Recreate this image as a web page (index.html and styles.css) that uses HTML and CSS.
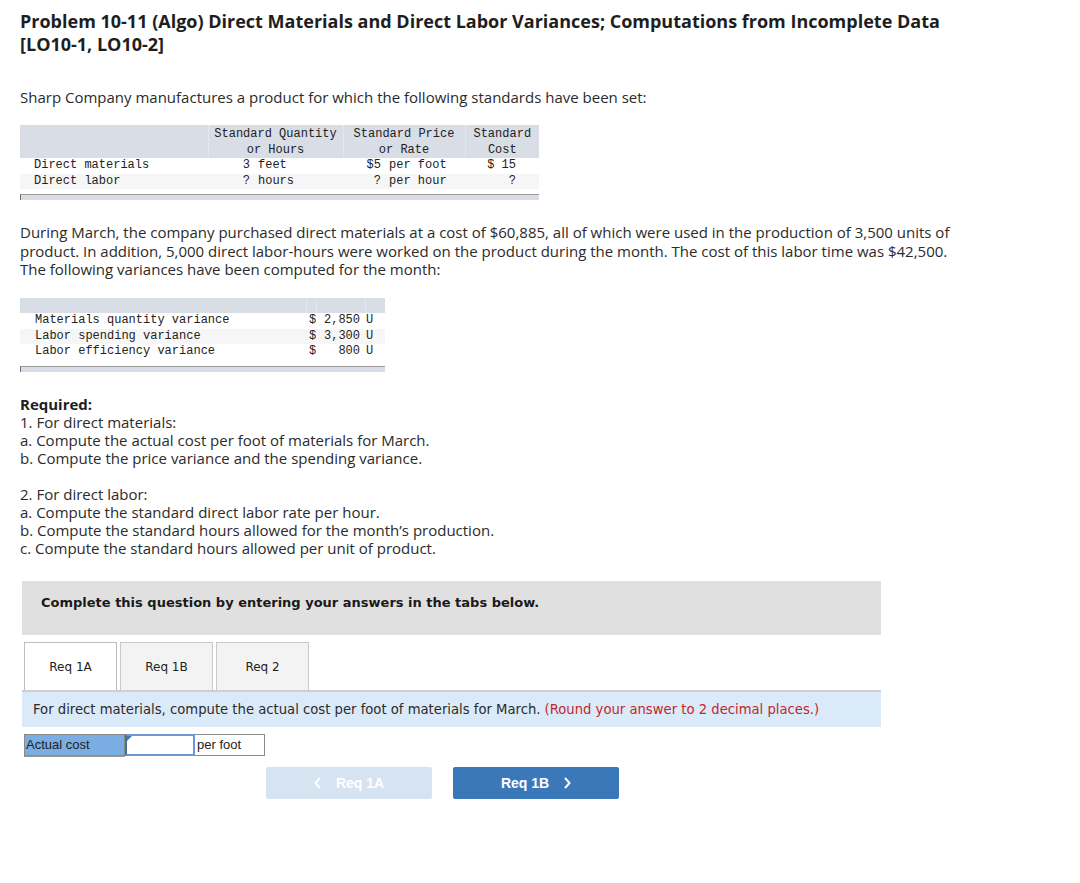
FILE: index.html
```html
<!DOCTYPE html>
<html>
<head>
<meta charset="utf-8">
<link rel="stylesheet" href="styles.css">
</head>
<body>
<div class="page">
  <h1 class="title">Problem 10-11 (Algo) Direct Materials and Direct Labor Variances; Computations from Incomplete Data<br>[LO10-1, LO10-2]</h1>
  <p class="intro">Sharp Company manufactures a product for which the following standards have been set:</p>

  <table class="std">
    <colgroup>
      <col class="k-label">
      <col class="k-qn">
      <col class="k-qu">
      <col class="k-pn">
      <col class="k-pu">
      <col class="k-cost">
    </colgroup>
    <thead>
      <tr>
        <th></th>
        <th colspan="2">Standard Quantity<br>or Hours</th>
        <th colspan="2">Standard Price<br>or Rate</th>
        <th>Standard<br>Cost</th>
      </tr>
    </thead>
    <tbody>
      <tr>
        <td class="lbl">Direct materials</td>
        <td class="num">3</td>
        <td class="unit">feet</td>
        <td class="num">$5</td>
        <td class="unit">per foot</td>
        <td class="cost">$ 15</td>
      </tr>
      <tr class="alt">
        <td class="lbl">Direct labor</td>
        <td class="num">?</td>
        <td class="unit">hours</td>
        <td class="num">?</td>
        <td class="unit">per hour</td>
        <td class="cost">?</td>
      </tr>
    </tbody>
  </table>
  <div class="tbl-foot w1"></div>

  <p class="para">During March, the company purchased direct materials at a cost of $60,885, all of which were used in the production of 3,500 units of<br>product. In addition, 5,000 direct labor-hours were worked on the product during the month. The cost of this labor time was $42,500.<br>The following variances have been computed for the month:</p>

  <table class="var">
    <colgroup>
      <col class="v-label">
      <col class="v-dol">
      <col class="v-amt">
      <col class="v-u">
    </colgroup>
    <thead>
      <tr>
        <th></th>
        <th></th>
        <th></th>
        <th></th>
      </tr>
    </thead>
    <tbody>
      <tr>
        <td class="lbl">Materials quantity variance</td>
        <td class="dol">$</td>
        <td class="amt">2,850</td>
        <td class="u">U</td>
      </tr>
      <tr class="alt">
        <td class="lbl">Labor spending variance</td>
        <td class="dol">$</td>
        <td class="amt">3,300</td>
        <td class="u">U</td>
      </tr>
      <tr>
        <td class="lbl">Labor efficiency variance</td>
        <td class="dol">$</td>
        <td class="amt">800</td>
        <td class="u">U</td>
      </tr>
    </tbody>
  </table>
  <div class="tbl-foot w2"></div>

  <div class="required">
    <p><strong>Required:</strong><br>1. For direct materials:<br>a. Compute the actual cost per foot of materials for March.<br>b. Compute the price variance and the spending variance.</p>
    <p>2. For direct labor:<br>a. Compute the standard direct labor rate per hour.<br>b. Compute the standard hours allowed for the month’s production.<br>c. Compute the standard hours allowed per unit of product.</p>
  </div>

  <div class="question-box">Complete this question by entering your answers in the tabs below.</div>

  <div class="tabs">
    <div class="tab active">Req 1A</div>
    <div class="tab">Req 1B</div>
    <div class="tab">Req 2</div>
  </div>
  <div class="instruction">For direct materials, compute the actual cost per foot of materials for March. <span class="hint">(Round your answer to 2 decimal places.)</span></div>

  <div class="answer-row">
    <div class="answer-label">Actual cost</div>
    <div class="answer-input"><span class="flag"></span></div>
    <div class="answer-unit">per foot</div>
  </div>

  <div class="nav">
    <div class="btn prev">
      <svg class="chev" width="8" height="12" viewBox="0 0 8 12"><path d="M6 1 L1.5 6 L6 11" fill="none" stroke="#ffffff" stroke-width="2"/></svg>
      <span>Req 1A</span>
    </div>
    <div class="btn next">
      <span>Req 1B</span>
      <svg class="chev" width="8" height="12" viewBox="0 0 8 12"><path d="M2 1 L6.5 6 L2 11" fill="none" stroke="#ffffff" stroke-width="2"/></svg>
    </div>
  </div>
</div>
</body>
</html>
```
FILE: styles.css
```css
html, body {
  margin: 0;
  padding: 0;
  background: #ffffff;
}

.page {
  padding: 10px 20px 0 20px;
  width: 1040px;
  font-family: "Open Sans", Lato, sans-serif;
  color: #2b2b2b;
}

.title {
  margin: 0;
  font-size: 18px;
  line-height: 23px;
  font-weight: 700;
  color: #1e1e1e;
}

.intro {
  margin: 32px 0 0 0;
  font-size: 15px;
  line-height: 18px;
}

/* standards table */
.std, .var {
  border-collapse: collapse;
  table-layout: fixed;
  font-family: "Liberation Mono", "DejaVu Sans Mono", monospace;
  font-size: 12px;
  color: #222;
}

.std {
  margin-top: 19px;
  width: 519px;
}

.k-label { width: 188px; }
.k-qn { width: 42px; }
.k-qu { width: 93px; }
.k-pn { width: 38px; }
.k-pu { width: 84px; }
.k-cost { width: 74px; }

.std th, .var th {
  background: #d9dde6;
  font-weight: 400;
  line-height: 16px;
  padding: 0;
  text-align: center;
  border-left: 1px solid #e4e7ee;
}

.std th {
  padding-top: 1px;
}

.std th:first-child, .var th:first-child {
  border-left: none;
}

.std td, .var td {
  padding: 0;
  line-height: 15.5px;
  white-space: pre;
  overflow: hidden;
}

.alt td {
  background: #f6f6f6;
}

.std td.lbl { padding-left: 14px; }
.std td.num { text-align: right; }
.std td.unit { padding-left: 8px; }
.std td.cost { text-align: right; padding-right: 23px; }

.tbl-foot {
  margin-top: 6px;
  height: 5px;
  background: #d9dde6;
  border-top: 1px solid #9a9a9a;
  border-left: 1px solid #6f6f6f;
}

.tbl-foot.w1 { width: 518px; margin-top: 5px; }
.tbl-foot.w2 { width: 364px; }

.para {
  margin: 23px 0 0 0;
  font-size: 15px;
  line-height: 18.5px;
}

/* variance table */
.var {
  margin-top: 19.5px;
  width: 365px;
}

.var th { height: 15px; line-height: 15px; }
.v-label { width: 286px; }
.v-dol { width: 10px; }
.v-amt { width: 49px; }
.v-u { width: 20px; }

.var td.lbl { padding-left: 15px; }
.var td.dol { text-align: left; padding-left: 3px; }
.var td.amt { text-align: right; padding-right: 5px; }
.var td.u { padding-left: 1px; }

/* required */
.required {
  margin-top: 23px;
  font-size: 15px;
  line-height: 18px;
}

.required p {
  margin: 0 0 18px 0;
}

.required p:last-child {
  margin-bottom: 0;
}

.required strong {
  font-weight: 700;
  color: #1e1e1e;
}

/* question area */
.question-box {
  margin: 24.5px 0 0 2px;
  width: 840px;
  height: 40px;
  padding: 14px 0 0 19px;
  background: #e0e0e0;
  font-family: "DejaVu Sans", Verdana, sans-serif;
  font-size: 13px;
  line-height: 16px;
  font-weight: 700;
  color: #1a1a1a;
}

.tabs {
  display: flex;
  gap: 3px;
  margin: 7px 0 0 4px;
  height: 48px;
}

.tab {
  width: 91px;
  height: 47px;
  border: 1px solid #c9c9c9;
  border-bottom: none;
  background: #f3f3f3;
  display: flex;
  align-items: center;
  justify-content: center;
  font-family: "DejaVu Sans", Verdana, sans-serif;
  font-size: 12px;
  color: #222;
}

.tab.active {
  background: #ffffff;
  border-color: #bdbdbd;
}

.instruction {
  margin-left: 2px;
  width: 848px;
  height: 35px;
  padding-left: 11px;
  border-top: 2px solid #cfcfcf;
  background: #dbeaf8;
  display: flex;
  align-items: center;
  font-family: "DejaVu Sans", Verdana, sans-serif;
  font-size: 13.2px;
  color: #2b2b2b;
}

.hint {
  color: #c1272d;
  margin-left: 4px;
}

.answer-row {
  display: flex;
  margin: 7px 0 0 4px;
  height: 22px;
  font-family: "Liberation Sans", Arial, sans-serif;
  font-size: 13px;
  color: #222;
}

.answer-label {
  width: 98px;
  height: 20px;
  padding-left: 1px;
  line-height: 20px;
  background: #7aaee2;
  border: 1px solid #8a8a8a;
  box-shadow: 0 1px 0 #9a9a9a;
}

.answer-input {
  position: relative;
  width: 66px;
  height: 18px;
  background: #ffffff;
  border: 2px solid #6a98d0;
  border-left-color: #4a6e9a;
}

.flag {
  position: absolute;
  left: 0;
  top: 0;
  width: 0;
  height: 0;
  border-top: 5px solid #3c78c8;
  border-right: 5px solid transparent;
}

.answer-unit {
  width: 67px;
  height: 20px;
  padding-left: 2px;
  line-height: 20px;
  background: #ffffff;
  border: 1px solid #8a8a8a;
  border-left: none;
}

.nav {
  display: flex;
  gap: 21px;
  margin: 11px 0 0 246px;
}

.btn {
  width: 166px;
  height: 32px;
  border-radius: 2px;
  display: flex;
  align-items: center;
  justify-content: center;
  gap: 14px;
  font-family: "Liberation Sans", Arial, sans-serif;
  font-size: 14px;
  font-weight: 700;
  color: #ffffff;
}

.btn.prev {
  background: #d6e3f0;
}

.btn.next {
  background: #3b78ba;
}

.chev {
  display: block;
}
```
